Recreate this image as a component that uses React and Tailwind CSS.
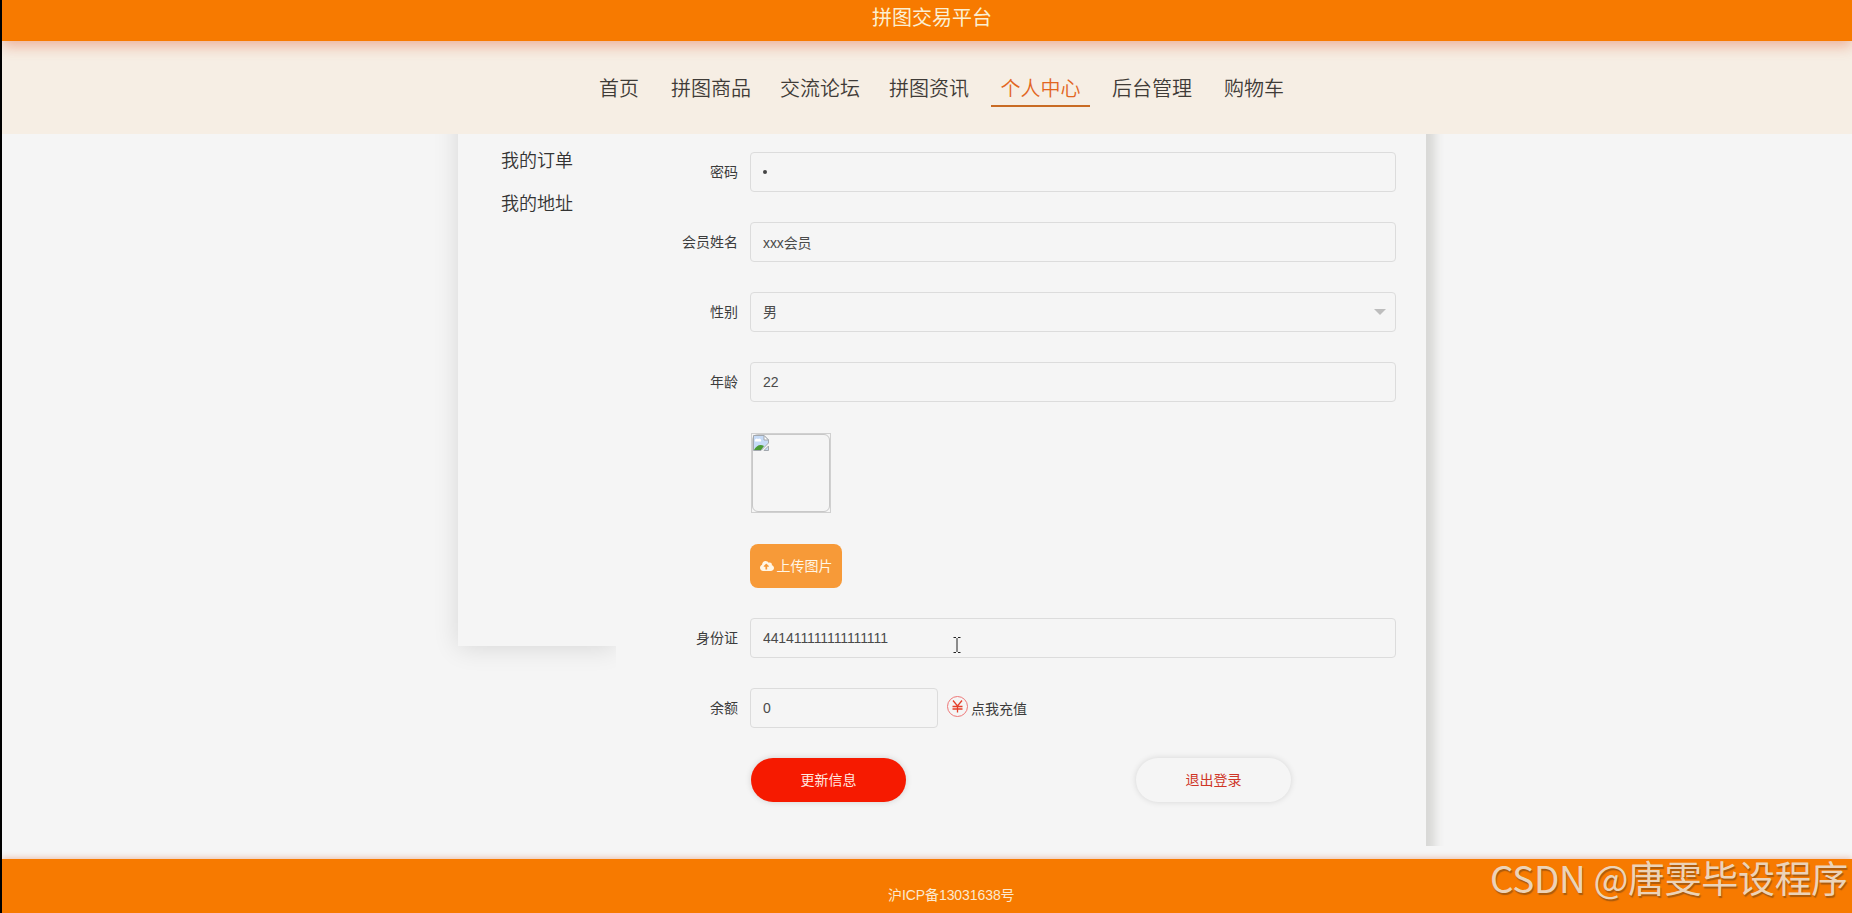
import React, { useState } from 'react';
import { FaCloudUploadAlt } from 'react-icons/fa';

const navItems = [
  { label: '首页', className: 'w-[60px] mr-[12px]' },
  { label: '拼图商品', className: 'w-[100px] mr-[9px]' },
  { label: '交流论坛', className: 'w-[100px] mr-[9px]' },
  { label: '拼图资讯', className: 'w-[100px] mr-[12px]' },
  { label: '个人中心', className: 'w-[99px] mr-[12px]' },
  { label: '后台管理', className: 'w-[100px] mr-[12px]' },
  { label: '购物车', className: 'w-[80px]' },
];

const inputClass =
  'h-10 rounded-[4px] border border-[#dcdcdc] bg-transparent px-3 text-sm tracking-[-0.1px] text-[#4a4a4a] outline-none';

function Row({ label, children }) {
  return (
    <div className="flex h-10 mb-[30px]">
      <label className="w-[122px] pt-[9px] text-right text-sm leading-[22px] text-[#3c3c3c] mr-[12px]">
        {label}
      </label>
      {children}
    </div>
  );
}

function BrokenImage() {
  return (
    <svg width="16" height="16" viewBox="0 0 16 16">
      <path d="M0.5 0.5H11L15.5 5V8L8 15.5H0.5Z" fill="#c6dbf7" stroke="#a3a8ae" />
      <path d="M2 6.5a2 2 0 0 1 3-2.5a2 2 0 0 1 3 2.5Z" fill="#fff" />
      <path d="M1 15C3 11 7 8.5 11 11L8 15Z" fill="#4b9b35" />
      <path d="M11 0.5V5H15.5Z" fill="#fff" stroke="#a3a8ae" />
      <path d="M11 15.5L15.5 11V15.5Z" fill="#c6dbf7" stroke="#a3a8ae" />
    </svg>
  );
}

function YuanIcon() {
  return (
    <svg width="22" height="22" viewBox="0 0 22 22" fill="none">
      <circle cx="10.5" cy="10.5" r="10" stroke="#ee7777" />
      <path d="M6 4.5L10.5 10L15 4.5M10.5 10V16.5M5.5 10.5H15.5M5.5 13H15.5" stroke="#e5402b" strokeWidth="1.3" />
    </svg>
  );
}

export default function App() {
  const [form, setForm] = useState({
    name: 'xxx会员',
    age: '22',
    idCard: '441411111111111111',
    balance: '0',
  });

  const update = (key) => (e) => setForm({ ...form, [key]: e.target.value });

  return (
    <div className="relative flex h-[913px] flex-col overflow-hidden border-l-2 border-black bg-[#f5f5f5] font-['Liberation_Sans','Noto_Sans_CJK_SC',sans-serif]">
      <header className="relative z-20 h-[41px] shrink-0 bg-[#f77a00] pl-[870px] text-xl leading-[36px] text-[#fbefd2] shadow-[0_5px_14px_rgba(225,90,50,0.42)]">
        拼图交易平台
      </header>

      <nav className="z-10 flex h-[93px] shrink-0 bg-[#f6eee4] pl-[587px] pt-[28px]">
        {navItems.map((item) => (
          <a
            key={item.label}
            className={`${item.className} h-[38px] border-b-2 text-center font-['Noto_Sans_CJK_SC',sans-serif] text-xl font-[350] leading-[38px] ${
              item.label === '个人中心' ? 'border-[#c96b24] text-[#e2661f]' : 'border-transparent text-[#3f3b37]'
            }`}
          >
            {item.label}
          </a>
        ))}
      </nav>

      <main className="flex h-[712px] shrink-0 overflow-hidden pl-[456px]">
        {/* Side menu */}
        <aside className="-mt-10 h-[552px] w-[158px] pl-[43px] pt-[47px] font-['Noto_Sans_CJK_SC',sans-serif] text-lg font-[350] text-[#333] shadow-[0_2px_24px_rgba(0,0,0,0.12)]">
          <div className="h-[43px] leading-[36px]">我的订单</div>
          <div className="h-[43px] leading-[36px]">我的地址</div>
        </aside>

        {/* Profile form */}
        <section className="relative -mt-10 h-[772px] w-[810px] bg-[#f5f5f5] pt-[58px] shadow-[9px_0_9px_#d8d8d6]">
          <Row label="密码">
            <div className={`${inputClass} flex w-[646px] items-center`}>
              <span className="h-1 w-1 rounded-full bg-[#444]"></span>
            </div>
          </Row>
          <Row label="会员姓名">
            <input className={`${inputClass} w-[646px]`} value={form.name} onChange={update('name')} />
          </Row>
          <Row label="性别">
            <div className={`${inputClass} flex w-[646px] items-center justify-between pr-[9px]`}>
              <span>男</span>
              <span className="border-x-[6px] border-t-[6px] border-x-transparent border-t-[#bdbdbd]"></span>
            </div>
          </Row>
          <Row label="年龄">
            <input className={`${inputClass} w-[646px]`} value={form.age} onChange={update('age')} />
          </Row>

          <div className="ml-[135px] mt-[31px] h-20 w-20 border border-[#d0d0d0]">
            <div className="h-full w-full rounded-md border border-[#c8c8c8]">
              <BrokenImage />
            </div>
          </div>

          <button className="ml-[134px] mt-[31px] flex h-11 w-[92px] items-center justify-center gap-[3px] rounded-lg bg-[#f79a38] text-sm text-[#fff6e6]">
            <FaCloudUploadAlt className="h-[14px] w-[14px]" />
            上传图片
          </button>

          <div className="mt-[30px]">
            <Row label="身份证">
              <input className={`${inputClass} w-[646px]`} value={form.idCard} onChange={update('idCard')} />
            </Row>
          </div>
          <Row label="余额">
            <input className={`${inputClass} w-[188px]`} value={form.balance} onChange={update('balance')} />
            <a className="ml-[9px] flex pt-[8px] text-sm leading-[26px] text-[#3c3c3c]">
              <YuanIcon />
              <span className="ml-[2px]">点我充值</span>
            </a>
          </Row>

          <div className="flex gap-[230px] pl-[135px]">
            <button className="h-11 w-[155px] rounded-full bg-[#f61a00] text-sm text-[#ffe9e0] shadow-[0_0_6px_rgba(0,0,0,0.15)]">
              更新信息
            </button>
            <button className="h-11 w-[155px] rounded-full bg-[#f5f5f5] text-sm text-[#cf3527] shadow-[0_0_6px_rgba(0,0,0,0.13)]">
              退出登录
            </button>
          </div>
        </section>
      </main>

      <footer className="mt-[13px] h-[54px] shrink-0 bg-[#f77a00] pl-[886px] pt-[25px] text-sm leading-[22px] tracking-[-0.08px] text-[#fbe9cf] shadow-[0_-1px_6px_rgba(225,110,60,0.4)]">
        沪ICP备13031638号
      </footer>

      {/* Text cursor */}
      <svg className="absolute left-[951px] top-[636px]" width="8" height="18" viewBox="0 0 8 18" fill="none" stroke="#222">
        <path d="M0.5 1.5H3M5 1.5H7.5M4 2V16M0.5 16.5H3M5 16.5H7.5" />
      </svg>

      <div className="absolute left-[1488px] top-[850px] whitespace-nowrap font-['Noto_Sans_CJK_SC',sans-serif] text-[37px] leading-[54px] tracking-[-0.35px] text-[#ecd3b8] [text-shadow:1px_2px_1px_rgba(120,70,20,0.6)]">
        CSDN @唐雯毕设程序
      </div>
    </div>
  );
}
